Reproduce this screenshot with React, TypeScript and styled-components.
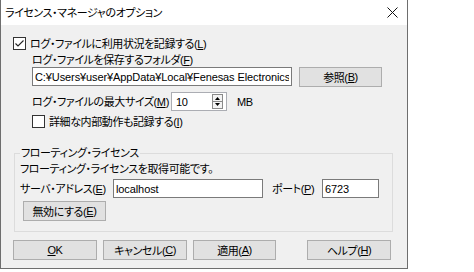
import React from 'react'
import styled, { createGlobalStyle } from 'styled-components'

const GlobalStyle = createGlobalStyle`
    html, body {
        margin: 0;
        padding: 0;
        background: #ffffff;
    }
    body {
        font-family: "Liberation Sans", "Noto Sans CJK JP", sans-serif;
        font-size: 11px;
        letter-spacing: -0.4px;
        font-feature-settings: "palt";
        color: #000;
    }
`

const Check = ({ checked }: { checked?: boolean }) => (
    <CheckBox>
        {checked && (
            <svg width="11" height="11" viewBox="0 0 11 11">
                <path d="M1.5 5.5 L4 8 L9.5 2.5" fill="none" stroke="#222" strokeWidth="1.1" />
            </svg>
        )}
    </CheckBox>
)

const App = () => {
    return (
        <>
            <GlobalStyle />
            <Window>
                <TitleBar>
                    <Title>ライセンス・マネージャのオプション</Title>
                    <CloseBtn>
                        <svg width="11" height="11" viewBox="0 0 11 11">
                            <path d="M0.5 0.5 L10.5 10.5 M10.5 0.5 L0.5 10.5" stroke="#111" strokeWidth="1" />
                        </svg>
                    </CloseBtn>
                </TitleBar>
                <Body>
                    <CheckRow>
                        <Check checked />
                        <span>ログ・ファイルに利用状況を記録する(<u>L</u>)</span>
                    </CheckRow>
                    <Indent>
                        <Label>ログ・ファイルを保存するフォルダ(<u>F</u>)</Label>
                        <Row>
                            <TextBox $w={260} readOnly value="C:¥Users¥user¥AppData¥Local¥Fenesas Electronics" />
                            <PushButton $w={83}>参照(<u>B</u>)</PushButton>
                        </Row>
                        <SizeRow>
                            <Label $w={129}>ログ・ファイルの最大サイズ(<u>M</u>)</Label>
                            <Spin>
                                <span>10</span>
                                <svg width="11" height="15" viewBox="0 0 11 15">
                                    <rect x="0.5" y="0.5" width="10" height="14" fill="#f3f3f3" stroke="#8a8a8a" />
                                    <path d="M1 7.5 H10" stroke="#8a8a8a" />
                                    <path d="M3 6 L5.5 3 L8 6 Z" fill="#000" />
                                    <path d="M3 9 L5.5 12 L8 9 Z" fill="#000" />
                                </svg>
                            </Spin>
                            <span>MB</span>
                        </SizeRow>
                        <CheckRow $top={2}>
                            <Check />
                            <span>詳細な内部動作も記録する(<u>I</u>)</span>
                        </CheckRow>
                    </Indent>
                    <Group>
                        <legend>フローティング・ライセンス</legend>
                        <Label>フローティング・ライセンスを取得可能です。</Label>
                        <ServerRow>
                            <Label $w={93}>サーバ・アドレス(<u>E</u>)</Label>
                            <TextBox $w={150} readOnly value="localhost" />
                            <Label $w={50}>ポート(<u>P</u>)</Label>
                            <TextBox $w={57} readOnly value="6723" />
                        </ServerRow>
                        <PushButton $w={83} style={{ marginLeft: 3, marginTop: 3 }}>無効にする(<u>E</u>)</PushButton>
                    </Group>
                    <ButtonRow>
                        <PushButton $w={84}><u>O</u>K</PushButton>
                        <PushButton $w={84}>キャンセル(<u>C</u>)</PushButton>
                        <PushButton $w={83}>適用(<u>A</u>)</PushButton>
                        <Spacer />
                        <PushButton $w={84}>ヘルプ(<u>H</u>)</PushButton>
                    </ButtonRow>
                </Body>
            </Window>
        </>
    )
}

export default App

const Window = styled.div`
    width: 408px;
    height: 269px;
    box-sizing: border-box;
    border: 1px solid #6e6e6e;
    border-top: none;
    background: #f0f0f0;
    display: flex;
    flex-direction: column;
`

const TitleBar = styled.div`
    height: 25px;
    background: #ffffff;
    display: flex;
    align-items: center;
    justify-content: space-between;
    padding: 0 9px 0 4px;
`

const Title = styled.div`
    line-height: 14px;
`

const CloseBtn = styled.div`
    display: flex;
    align-items: center;
`

const Body = styled.div`
    flex: 1;
    padding: 12px 0 0 12px;
    display: flex;
    flex-direction: column;
`

const CheckRow = styled.div<{ $top?: number }>`
    display: flex;
    align-items: center;
    gap: 4px;
    height: 13px;
    line-height: 14px;
    margin-top: ${p => p.$top ?? 0}px;
`

const CheckBox = styled.div`
    width: 13px;
    height: 13px;
    box-sizing: border-box;
    border: 1px solid #333;
    background: #fff;
    display: flex;
    align-items: center;
    justify-content: center;
    flex: none;
`

const Indent = styled.div`
    padding-left: 19px;
    display: flex;
    flex-direction: column;
`

const Label = styled.div<{ $w?: number }>`
    line-height: 14px;
    white-space: nowrap;
    ${p => p.$w ? `width: ${p.$w}px; flex: none;` : ''}
    &:first-child {
        margin-top: 3px;
    }
`

const Row = styled.div`
    display: flex;
    align-items: flex-start;
    gap: 7px;
`

const SizeRow = styled.div`
    display: flex;
    align-items: center;
    gap: 10px;
    margin-top: 5px;
    height: 19px;
    margin-bottom: 2px;
    > ${Label} {
        margin-top: 0;
    }
`

const TextBox = styled.input<{ $w: number }>`
    width: ${p => p.$w}px;
    height: 19px;
    box-sizing: border-box;
    border: 1px solid #7a7a7a;
    background: #fff;
    font: inherit;
    letter-spacing: -0.1px;
    padding: 0 2px;
    margin: 0;
    outline: 0;
    color: #000;
`

const PushButton = styled.div<{ $w: number }>`
    width: ${p => p.$w}px;
    height: 20px;
    box-sizing: border-box;
    border: 1px solid #adadad;
    background: #e1e1e1;
    display: flex;
    align-items: center;
    justify-content: center;
    white-space: nowrap;
    flex: none;
`

const Spin = styled.div`
    width: 56px;
    height: 19px;
    box-sizing: border-box;
    border: 1px solid #abadb3;
    background: #fff;
    display: flex;
    align-items: center;
    justify-content: space-between;
    padding: 0 3px 0 4px;
`

const Group = styled.fieldset`
    margin: 18px 0 0 1px;
    width: 379px;
    box-sizing: border-box;
    border: 1px solid #dcdcdc;
    padding: 0 5px 10px 5px;
    min-width: 0;
    > legend {
        padding: 0 1px;
        line-height: 14px;
    }
    > ${Label} {
        margin-top: 2px;
    }
`

const ServerRow = styled.div`
    display: flex;
    align-items: center;
    margin-top: 3px;
    > ${TextBox}:nth-of-type(1) {
        margin-right: 9px;
    }
    > ${Label} {
        margin-top: 0;
    }
`

const ButtonRow = styled.div`
    display: flex;
    gap: 6px;
    margin-top: 8px;
    padding-right: 16px;
`

const Spacer = styled.div`
    flex: 1;
`
